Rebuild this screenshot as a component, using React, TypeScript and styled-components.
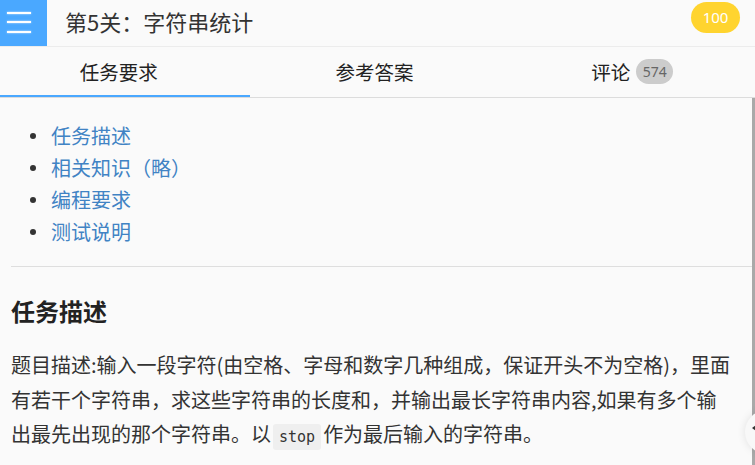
import styled, { createGlobalStyle } from 'styled-components';

const GlobalStyle = createGlobalStyle`
  html, body {
    margin: 0;
    padding: 0;
    background: #fafafa;
  }
  body {
    font-family: "Noto Sans CJK SC", "Noto Sans", sans-serif;
    color: #333;
  }
  * {
    box-sizing: border-box;
  }
`;

const Page = styled.div`
  width: 100%;
  height: 100vh;
  display: flex;
  flex-direction: column;
  background: #fafafa;
  overflow: hidden;
  position: relative;
`;

const Header = styled.div`
  height: 47px;
  display: flex;
  align-items: center;
  border-bottom: 1px solid #ececec;
  padding-right: 15px;
  flex-shrink: 0;
`;

const MenuButton = styled.div`
  width: 47px;
  height: 46px;
  align-self: flex-start;
  background: #4aa8ff;
  display: flex;
  flex-direction: column;
  justify-content: center;
  align-items: flex-start;
  gap: 7.5px;
  padding-left: 7px;
  padding-bottom: 2px;
`;

const MenuLine = styled.span`
  display: block;
  width: 24px;
  height: 2px;
  background: #fff;
  box-shadow: 0 0 2px rgba(255, 255, 255, 0.8);
`;

const Title = styled.div`
  flex: 1;
  margin-left: 18px;
  font-size: 22px;
  line-height: 30px;
  color: #333;
  margin-top: -4px;
`;

const Score = styled.div`
  width: 49px;
  height: 31px;
  border-radius: 16px;
  background: #ffd42f;
  color: #fff;
  font-family: "Noto Sans", "Open Sans", sans-serif;
  font-size: 15px;
  display: flex;
  align-items: center;
  justify-content: center;
  margin-top: -12px;
`;

const Tabs = styled.div`
  height: 51px;
  display: flex;
  border-bottom: 1px solid #dcdcdc;
  flex-shrink: 0;
`;

const Tab = styled.div<{ $active?: boolean; $shift?: number }>`
  flex: 1;
  position: relative;
  display: flex;
  align-items: center;
  justify-content: center;
  gap: 6px;
  font-size: 19.5px;
  color: #222;
  padding-right: ${(p) => p.$shift || 0}px;
  padding-bottom: 1px;

  &::after {
    content: '';
    display: ${(p) => (p.$active ? 'block' : 'none')};
    position: absolute;
    left: 0;
    bottom: 0;
    width: calc(100% - 6px);
    height: 2px;
    background: #4aa8ff;
  }
`;

const Count = styled.span`
  display: inline-flex;
  align-items: center;
  justify-content: center;
  width: 37px;
  height: 25px;
  border-radius: 13px;
  background: #cccccc;
  color: #666;
  font-family: "Noto Sans", "Open Sans", sans-serif;
  font-size: 14px;
`;

const Body = styled.div`
  flex: 1;
  display: flex;
  min-height: 0;
`;

const Content = styled.div`
  flex: 1;
  padding-left: 11px;
  overflow: hidden;
`;

const Divider = styled.div`
  width: 3px;
  background: #a9a9a9;
`;

const Toc = styled.ul`
  list-style: none;
  margin: 0;
  padding: 21px 0 0 0;
`;

const TocItem = styled.li`
  display: flex;
  align-items: center;
  height: 32px;
  font-size: 20px;
  color: #4183c4;
`;

const Bullet = styled.span`
  width: 6px;
  height: 6px;
  border-radius: 50%;
  background: #333;
  margin-left: 19px;
  margin-right: 15px;
  margin-top: 1px;
`;

const Rule = styled.hr`
  border: none;
  border-top: 1px solid #dedede;
  margin: 19px 0 0 0;
`;

const Heading = styled.h3`
  margin: 28px 0 0 0;
  font-size: 24px;
  line-height: 32px;
  font-weight: 700;
  color: #222;
`;

const Paragraph = styled.p`
  margin: 21px 0 0 0;
  max-width: 721px;
  font-size: 20px;
  line-height: 34.5px;
  color: #333;
`;

const Code = styled.code`
  display: inline-block;
  font-family: "DejaVu Sans Mono", "Liberation Mono", monospace;
  font-size: 15px;
  line-height: 26px;
  background: #efefef;
  border-radius: 3px;
  padding: 0 6px;
  margin: 0 2px;
  color: #333;
`;

const FloatButton = styled.div`
  position: absolute;
  right: -34px;
  top: 410px;
  width: 44px;
  height: 44px;
  border-radius: 50%;
  background: #f8f8f8;
  box-shadow: 0 0 8px rgba(0, 0, 0, 0.1);
  display: flex;
  align-items: center;
  padding-left: 7px;
`;

const Arrow = styled.span`
  width: 0;
  height: 0;
  border-top: 3px solid transparent;
  border-bottom: 3px solid transparent;
  border-right: 4px solid #333;
  margin-top: -8px;
`;

const tocItems = ['任务描述', '相关知识（略）', '编程要求', '测试说明'];

const App = () => {
  return (
    <Page>
      <GlobalStyle />
      <Header>
        <MenuButton>
          <MenuLine />
          <MenuLine />
          <MenuLine />
        </MenuButton>
        <Title>第5关：字符串统计</Title>
        <Score>100</Score>
      </Header>
      <Tabs>
        <Tab $active $shift={18}>任务要求</Tab>
        <Tab $shift={20}>参考答案</Tab>
        <Tab $shift={4}>
          评论 <Count>574</Count>
        </Tab>
      </Tabs>
      <Body>
        <Content>
          <Toc>
            {tocItems.map((item) => (
              <TocItem key={item}>
                <Bullet />
                {item}
              </TocItem>
            ))}
          </Toc>
          <Rule />
          <Heading>任务描述</Heading>
          <Paragraph>
            题目描述:输入一段字符(由空格、字母和数字几种组成，保证开头不为空格)，里面有若干个字符串，求这些字符串的长度和，并输出最长字符串内容,如果有多个输出最先出现的那个字符串。以<Code>stop</Code>作为最后输入的字符串。
          </Paragraph>
        </Content>
        <Divider />
      </Body>
      <FloatButton>
        <Arrow />
      </FloatButton>
    </Page>
  );
};

export default App;
